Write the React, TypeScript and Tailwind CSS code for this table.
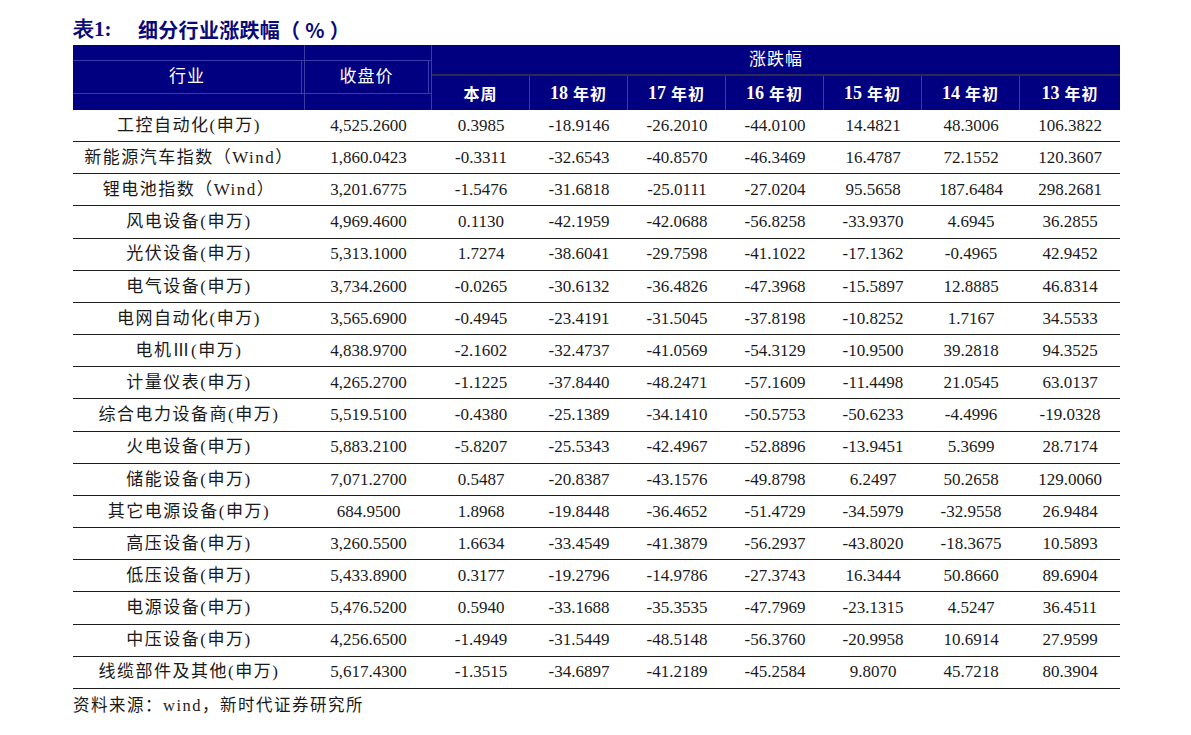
import React from "react";

const rows: string[][] = [
  ["工控自动化(申万)", "4,525.2600", "0.3985", "-18.9146", "-26.2010", "-44.0100", "14.4821", "48.3006", "106.3822"],
  ["新能源汽车指数（Wind）", "1,860.0423", "-0.3311", "-32.6543", "-40.8570", "-46.3469", "16.4787", "72.1552", "120.3607"],
  ["锂电池指数（Wind）", "3,201.6775", "-1.5476", "-31.6818", "-25.0111", "-27.0204", "95.5658", "187.6484", "298.2681"],
  ["风电设备(申万)", "4,969.4600", "0.1130", "-42.1959", "-42.0688", "-56.8258", "-33.9370", "4.6945", "36.2855"],
  ["光伏设备(申万)", "5,313.1000", "1.7274", "-38.6041", "-29.7598", "-41.1022", "-17.1362", "-0.4965", "42.9452"],
  ["电气设备(申万)", "3,734.2600", "-0.0265", "-30.6132", "-36.4826", "-47.3968", "-15.5897", "12.8885", "46.8314"],
  ["电网自动化(申万)", "3,565.6900", "-0.4945", "-23.4191", "-31.5045", "-37.8198", "-10.8252", "1.7167", "34.5533"],
  ["电机Ⅲ(申万)", "4,838.9700", "-2.1602", "-32.4737", "-41.0569", "-54.3129", "-10.9500", "39.2818", "94.3525"],
  ["计量仪表(申万)", "4,265.2700", "-1.1225", "-37.8440", "-48.2471", "-57.1609", "-11.4498", "21.0545", "63.0137"],
  ["综合电力设备商(申万)", "5,519.5100", "-0.4380", "-25.1389", "-34.1410", "-50.5753", "-50.6233", "-4.4996", "-19.0328"],
  ["火电设备(申万)", "5,883.2100", "-5.8207", "-25.5343", "-42.4967", "-52.8896", "-13.9451", "5.3699", "28.7174"],
  ["储能设备(申万)", "7,071.2700", "0.5487", "-20.8387", "-43.1576", "-49.8798", "6.2497", "50.2658", "129.0060"],
  ["其它电源设备(申万)", "684.9500", "1.8968", "-19.8448", "-36.4652", "-51.4729", "-34.5979", "-32.9558", "26.9484"],
  ["高压设备(申万)", "3,260.5500", "1.6634", "-33.4549", "-41.3879", "-56.2937", "-43.8020", "-18.3675", "10.5893"],
  ["低压设备(申万)", "5,433.8900", "0.3177", "-19.2796", "-14.9786", "-27.3743", "16.3444", "50.8660", "89.6904"],
  ["电源设备(申万)", "5,476.5200", "0.5940", "-33.1688", "-35.3535", "-47.7969", "-23.1315", "4.5247", "36.4511"],
  ["中压设备(申万)", "4,256.6500", "-1.4949", "-31.5449", "-48.5148", "-56.3760", "-20.9958", "10.6914", "27.9599"],
  ["线缆部件及其他(申万)", "5,617.4300", "-1.3515", "-34.6897", "-41.2189", "-45.2584", "9.8070", "45.7218", "80.3904"],
];

const subHeads: [string, string][] = [
  ["", "本周"],
  ["18", "年初"],
  ["17", "年初"],
  ["16", "年初"],
  ["15", "年初"],
  ["14", "年初"],
  ["13", "年初"],
];

const serif = { fontFamily: '"Liberation Serif", "Noto Sans CJK SC", serif' };

export default function App() {
  return (
    <div className="w-[1191px] h-[735px] bg-white relative overflow-hidden" style={serif}>
      <div className="pl-[73px] pt-[17px]">
        {/* Title */}
        <div className="flex items-center h-[26px] text-[#0a0a78]">
          <span className="font-bold text-[21px] w-[65px]" style={{ fontFamily: '"Liberation Serif", serif' }}>
            表1:
          </span>
          <span
            className="font-bold text-[20px] tracking-[0.3px]"
            style={{ fontFamily: '"Noto Sans CJK SC", sans-serif' }}
          >
            细分行业涨跌幅（ % ）
          </span>
        </div>

        {/* Table */}
        <div className="mt-[2px] w-[1047px]">
          {/* Header */}
          <div className="flex h-[65px] bg-[#000080] text-white">
            <div className="w-[232px] h-full border-r border-[#3b3ba6] flex flex-col">
              <div className="h-[16px] border-b border-[#3b3ba6]" />
              <div className="flex-1 flex items-center justify-center border-r border-[#3b3ba6] mr-[2px] text-[17px] tracking-[1px]">
                行业
              </div>
              <div className="h-[17px] border-t border-[#3b3ba6]" />
            </div>
            <div className="w-[127px] h-full border-r border-[#3b3ba6] flex flex-col">
              <div className="h-[16px] border-b border-[#3b3ba6]" />
              <div className="flex-1 flex items-center justify-center border-r border-[#3b3ba6] mr-[2px] text-[17px] tracking-[1px]">
                收盘价
              </div>
              <div className="h-[17px] border-t border-[#3b3ba6]" />
            </div>
            <div className="flex-1 flex flex-col">
              <div className="h-[31px] flex items-center justify-center text-[17px] tracking-[1px] border-b-2 border-[#2b2b55]">
                涨跌幅
              </div>
              <div className="flex-1 flex">
                {subHeads.map(([n, t], i) => (
                  <div
                    key={i}
                    className={`${i === 6 ? "w-[100px]" : "w-[98px] border-r border-[#3b3ba6]"} flex items-center justify-center gap-[5px] text-[17px] font-bold`}
                  >
                    {n && <span className="text-[18px]">{n}</span>}
                    <span
                      className="font-bold tracking-[1px]"
                      style={{ fontFamily: '"Noto Sans CJK SC", sans-serif', fontSize: 16 }}
                    >
                      {t}
                    </span>
                  </div>
                ))}
              </div>
            </div>
          </div>

          {/* Body */}
          {rows.map((r, ri) => (
            <div
              key={ri}
              className="grid grid-cols-[232px_127px_98px_98px_98px_98px_98px_98px_100px] h-[32.17px] border-b border-[#1e1e1e] text-[17px] text-[#1a1a1a]"
            >
              {r.map((c, ci) => (
                <div key={ci} className="flex items-center justify-center whitespace-nowrap">
                  {ci === 0 ? <span className="tracking-[1.5px]">{c}</span> : c}
                </div>
              ))}
            </div>
          ))}

          {/* Footer */}
          <div className="pt-[5px] text-[16.5px] text-[#1a1a1a] tracking-[1.5px]">
            资料来源：wind，新时代证券研究所
          </div>
        </div>
      </div>
    </div>
  );
}
